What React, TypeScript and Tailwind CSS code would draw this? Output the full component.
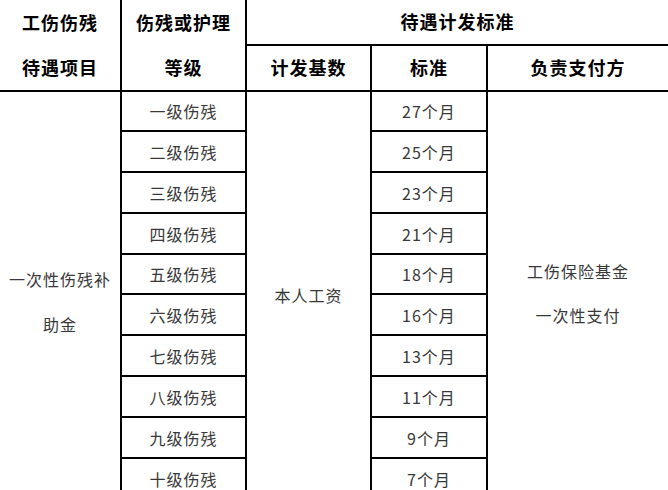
const levels = [
  { grade: "一级伤残", months: "27个月", h: "h-[40px]" },
  { grade: "二级伤残", months: "25个月", h: "h-[41px]" },
  { grade: "三级伤残", months: "23个月", h: "h-[41px]" },
  { grade: "四级伤残", months: "21个月", h: "h-[41px]" },
  { grade: "五级伤残", months: "18个月", h: "h-[40px]" },
  { grade: "六级伤残", months: "16个月", h: "h-[41px]" },
  { grade: "七级伤残", months: "13个月", h: "h-[41px]" },
  { grade: "八级伤残", months: "11个月", h: "h-[41px]" },
  { grade: "九级伤残", months: "9个月", h: "h-[41px]" },
  { grade: "十级伤残", months: "7个月", h: "h-[41px]" },
];

const cell = "border-2 border-black text-center align-middle p-0";
const head = "font-bold text-[18px] tracking-[1px] text-black";
const body = "text-[16px] tracking-[1px] text-[#383838]";

export default function App() {
  return (
    <div
      className="w-[668px] h-[490px] overflow-hidden bg-white"
      style={{ fontFamily: '"Noto Sans CJK SC", "Noto Sans", sans-serif' }}
    >
      <table className="w-[668px] table-fixed border-collapse">
        <colgroup>
          <col className="w-[121px]" />
          <col className="w-[125px]" />
          <col className="w-[125px]" />
          <col className="w-[116px]" />
          <col className="w-[181px]" />
        </colgroup>
        <thead>
          {/* Header row 1 */}
          <tr className="h-[44px]">
            <td rowSpan={2} className={`${cell} ${head} border-t-0 border-l-0 leading-[45px]`}>
              <div>工伤伤残</div>
              <div>待遇项目</div>
            </td>
            <td rowSpan={2} className={`${cell} ${head} border-t-0 leading-[45px]`}>
              <div>伤残或护理</div>
              <div>等级</div>
            </td>
            <td colSpan={3} className={`${cell} ${head} border-t-0 border-r-0`}>
              待遇计发标准
            </td>
          </tr>
          {/* Header row 2 */}
          <tr className="h-[45px]">
            <td className={`${cell} ${head}`}>计发基数</td>
            <td className={`${cell} ${head}`}>标准</td>
            <td className={`${cell} ${head} border-r-0`}>负责支付方</td>
          </tr>
        </thead>
        <tbody>
          {levels.map((row, i) => (
            <tr key={row.grade} className={row.h}>
              {i === 0 && (
                <td rowSpan={10} className={`${cell} ${body} border-l-0 leading-[45px] pt-[14px]`}>
                  <div>一次性伤残补</div>
                  <div>助金</div>
                </td>
              )}
              <td className={`${cell} ${body}`}>{row.grade}</td>
              {i === 0 && (
                <td rowSpan={10} className={`${cell} ${body}`}>本人工资</td>
              )}
              <td className={`${cell} ${body}`}>{row.months}</td>
              {i === 0 && (
                <td rowSpan={10} className={`${cell} ${body} border-r-0 leading-[44px] pb-[4px]`}>
                  <div>工伤保险基金</div>
                  <div>一次性支付</div>
                </td>
              )}
            </tr>
          ))}
        </tbody>
      </table>
    </div>
  );
}
